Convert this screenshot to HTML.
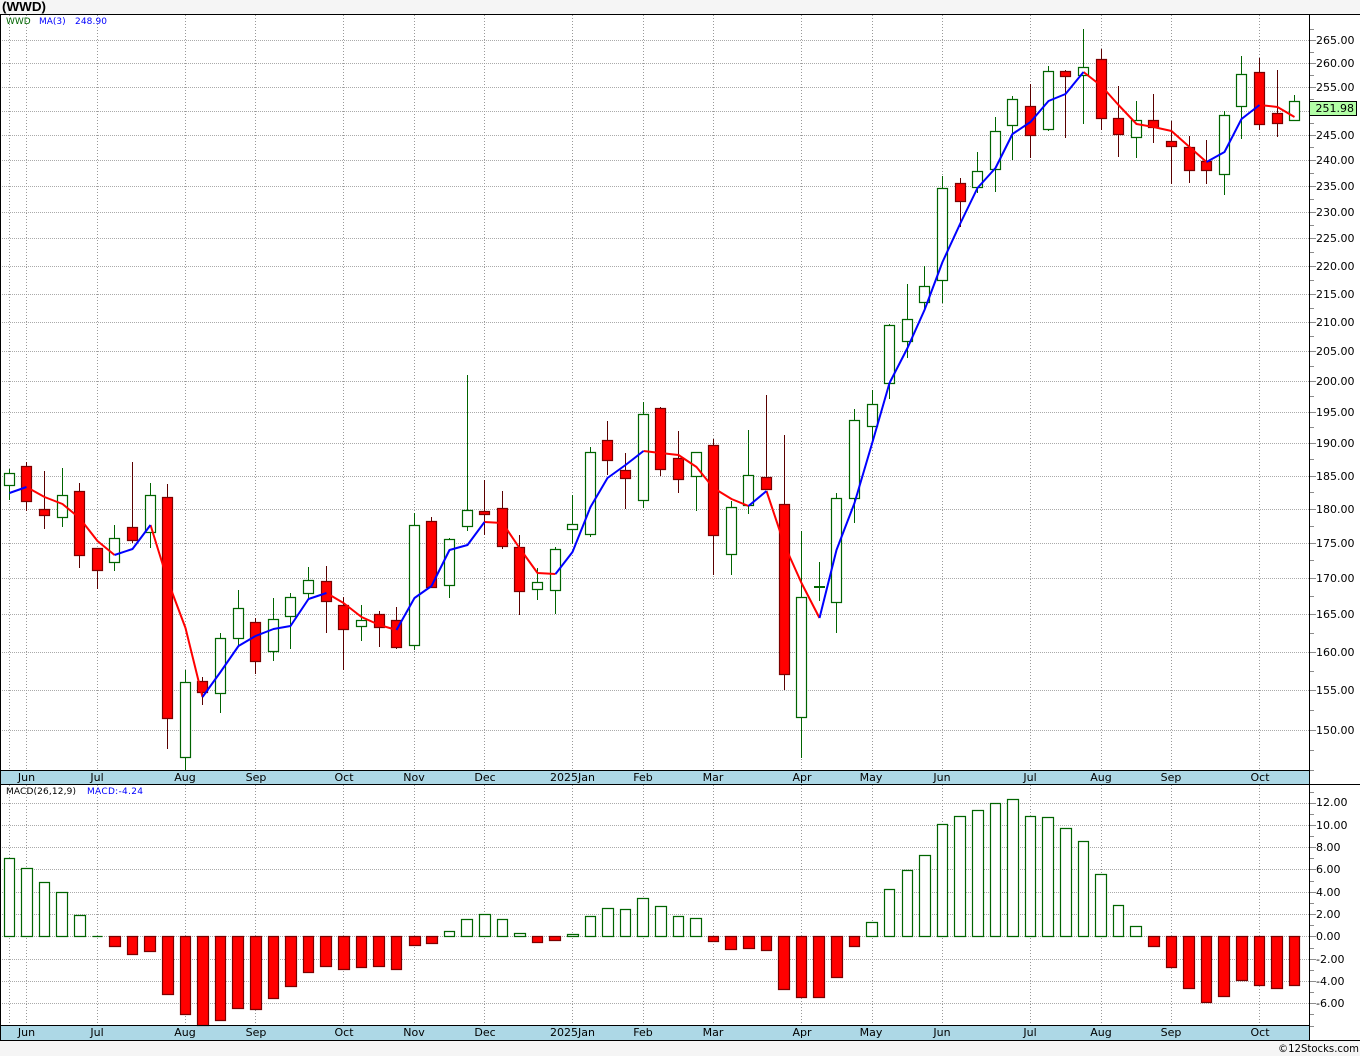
<!DOCTYPE html>
<html lang="en">
<head>
<meta charset="utf-8">
<title>WWD</title>
<style>
html,body{margin:0;padding:0;background:#f5f5f5;width:1360px;height:1056px;overflow:hidden}
svg{display:block;position:absolute;left:0;top:0}
text{font-family:"DejaVu Sans","Liberation Sans",sans-serif;font-size:11px;fill:#000}
.l{font-size:9px}
</style>
</head>
<body>
<svg width="1360" height="1056" viewBox="0 0 1360 1056" xmlns="http://www.w3.org/2000/svg">
<rect x="0" y="14" width="1360" height="1026" fill="#fff"/>
<rect x="0" y="770" width="1310" height="15" fill="#add8e6"/>
<rect x="0" y="1025" width="1310" height="15" fill="#add8e6"/>

<!-- grid -->
<g fill="none" stroke="#aaaaaa" stroke-width="1" stroke-dasharray="1 1">
<path d="M0 40.5H1315M0 63.5H1315M0 87.5H1315M0 111.5H1315M0 135.5H1315M0 160.5H1315M0 186.5H1315M0 212.5H1315M0 238.5H1315M0 266.5H1315M0 294.5H1315M0 322.5H1315M0 351.5H1315M0 381.5H1315M0 412.5H1315M0 443.5H1315M0 476.5H1315M0 509.5H1315M0 543.5H1315M0 578.5H1315M0 614.5H1315M0 652.5H1315M0 690.5H1315M0 730.5H1315"/>
<path d="M0 803.5H1315M0 825.5H1315M0 847.5H1315M0 869.5H1315M0 892.5H1315M0 914.5H1315M0 936.5H1315M0 959.5H1315M0 981.5H1315M0 1003.5H1315"/>
</g>
<g fill="none" stroke="#999999" stroke-width="1" stroke-dasharray="1 2">
<path d="M9.5 15V770M26.5 15V770M97.5 15V770M185.5 15V770M255.5 15V770M343.5 15V770M414.5 15V770M484.5 15V770M572.5 15V770M643.5 15V770M713.5 15V770M801.5 15V770M872.5 15V770M942.5 15V770M1030.5 15V770M1101.5 15V770M1171.5 15V770M1259.5 15V770"/>
<path d="M9.5 785V1025M26.5 785V1025M97.5 785V1025M185.5 785V1025M255.5 785V1025M343.5 785V1025M414.5 785V1025M484.5 785V1025M572.5 785V1025M643.5 785V1025M713.5 785V1025M801.5 785V1025M872.5 785V1025M942.5 785V1025M1030.5 785V1025M1101.5 785V1025M1171.5 785V1025M1259.5 785V1025"/>
</g>

<!-- axis ticks -->
<g fill="none" stroke="#8c8c8c" stroke-width="1">
<path d="M1310 40.5h6M1310 63.5h6M1310 87.5h6M1310 111.5h6M1310 135.5h6M1310 160.5h6M1310 186.5h6M1310 212.5h6M1310 238.5h6M1310 266.5h6M1310 294.5h6M1310 322.5h6M1310 351.5h6M1310 381.5h6M1310 412.5h6M1310 443.5h6M1310 476.5h6M1310 509.5h6M1310 543.5h6M1310 578.5h6M1310 614.5h6M1310 652.5h6M1310 690.5h6M1310 730.5h6"/>
<path d="M1310 29.5h4M1310 52.5h4M1310 75.5h4M1310 99.5h4M1310 123.5h4M1310 147.5h4M1310 173.5h4M1310 199.5h4M1310 225.5h4M1310 252.5h4M1310 280.5h4M1310 308.5h4M1310 336.5h4M1310 366.5h4M1310 396.5h4M1310 427.5h4M1310 459.5h4M1310 492.5h4M1310 526.5h4M1310 560.5h4M1310 596.5h4M1310 633.5h4M1310 671.5h4M1310 710.5h4M1310 750.5h4M1310 770.5h4"/>
<path d="M1310 803.5h6M1310 825.5h6M1310 847.5h6M1310 869.5h6M1310 892.5h6M1310 914.5h6M1310 936.5h6M1310 959.5h6M1310 981.5h6M1310 1003.5h6"/>
<path d="M1310 792.5h4M1310 814.5h4M1310 836.5h4M1310 858.5h4M1310 881.5h4M1310 903.5h4M1310 925.5h4M1310 948.5h4M1310 970.5h4M1310 992.5h4M1310 1014.5h4M1310 1026.5h4"/>
</g>

<!-- wicks -->
<path fill="none" stroke="#006400" stroke-width="1" d="M9.5 469V500M62.5 468V527M114.5 525V571M150.5 483V548M185.5 670V770M220.5 633V713M238.5 590V647M273.5 598V661M290.5 593V649M308.5 567V598M361.5 605V641M414.5 513V650M449.5 538V598M467.5 375V531M537.5 568V600M555.5 547V614M572.5 495V544M590.5 447V537M643.5 402V508M696.5 452V511M731.5 501V575M748.5 430V514M801.5 531V758M819.5 562V601M836.5 493V633M854.5 409V523M872.5 390V444M889.5 324V399M907.5 284V358M924.5 266V310M942.5 176V303M977.5 152V193M995.5 117V192M1012.5 96V160M1048.5 66V131M1083.5 29V124M1136.5 101V158M1224.5 111V195M1241.5 56V139M1294.5 95V120"/>
<path fill="none" stroke="#5a0000" stroke-width="1" d="M26.5 462V511M44.5 471V529M79.5 483V568M97.5 548V589M132.5 462V543M167.5 484V749M202.5 677V705M255.5 618V674M326.5 566V633M343.5 597V670M379.5 611V647M396.5 607V649M431.5 517V588M484.5 480V535M502.5 491V549M519.5 535V615M607.5 421V475M625.5 453V509M660.5 407V476M678.5 431V493M713.5 439V575M766.5 395V489M784.5 435V690M960.5 178V227M1030.5 84V158M1065.5 70V138M1101.5 49V130M1118.5 86V157M1153.5 94V143M1171.5 121V184M1189.5 136V183M1206.5 140V184M1259.5 58V130M1277.5 70V137"/>

<!-- green candle bodies -->
<path fill="#fff" stroke="#006400" stroke-width="1.2" d="M4.5 473.5h10v12h-10zM57.5 495.5h10v22h-10zM109.5 538.5h10v24h-10zM145.5 495.5h10v37h-10zM180.5 682.5h10v75h-10zM215.5 638.5h10v55h-10zM233.5 608.5h10v30h-10zM268.5 619.5h10v32h-10zM285.5 597.5h10v19h-10zM303.5 580.5h10v13h-10zM356.5 620.5h10v6h-10zM409.5 525.5h10v120h-10zM444.5 539.5h10v46h-10zM462.5 510.5h10v16h-10zM532.5 582.5h10v7h-10zM550.5 549.5h10v41h-10zM567.5 524.5h10v5h-10zM585.5 452.5h10v82h-10zM638.5 414.5h10v86h-10zM691.5 452.5h10v24h-10zM726.5 507.5h10v47h-10zM743.5 475.5h10v30h-10zM796.5 597.5h10v120h-10zM831.5 498.5h10v104h-10zM849.5 420.5h10v78h-10zM867.5 404.5h10v22h-10zM884.5 325.5h10v58h-10zM902.5 319.5h10v22h-10zM919.5 286.5h10v16h-10zM937.5 188.5h10v92h-10zM972.5 171.5h10v16h-10zM990.5 131.5h10v38h-10zM1007.5 99.5h10v26h-10zM1043.5 71.5h10v58h-10zM1078.5 67.5h10v8h-10zM1131.5 120.5h10v17h-10zM1219.5 115.5h10v59h-10zM1236.5 74.5h10v32h-10zM1289.5 101.5h10v19h-10z"/>
<rect x="814" y="586" width="11" height="2" fill="#006400"/>

<!-- red candle bodies -->
<path fill="#f00" stroke="#7a0000" stroke-width="1.2" d="M21.5 466.5h10v35h-10zM39.5 509.5h10v6h-10zM74.5 491.5h10v64h-10zM92.5 548.5h10v22h-10zM127.5 527.5h10v13h-10zM162.5 497.5h10v221h-10zM197.5 681.5h10v11h-10zM250.5 622.5h10v39h-10zM321.5 581.5h10v20h-10zM338.5 605.5h10v24h-10zM374.5 614.5h10v13h-10zM391.5 620.5h10v27h-10zM426.5 521.5h10v66h-10zM479.5 511.5h10v3h-10zM497.5 508.5h10v38h-10zM514.5 547.5h10v44h-10zM602.5 440.5h10v20h-10zM620.5 470.5h10v8h-10zM655.5 408.5h10v61h-10zM673.5 458.5h10v21h-10zM708.5 445.5h10v90h-10zM761.5 477.5h10v12h-10zM779.5 504.5h10v170h-10zM955.5 183.5h10v18h-10zM1025.5 106.5h10v29h-10zM1060.5 71.5h10v5h-10zM1096.5 59.5h10v59h-10zM1113.5 118.5h10v16h-10zM1148.5 120.5h10v7h-10zM1166.5 141.5h10v5h-10zM1184.5 147.5h10v23h-10zM1201.5 161.5h10v9h-10zM1254.5 72.5h10v52h-10zM1272.5 113.5h10v10h-10z"/>

<!-- moving average -->
<g fill="none" stroke-width="2" stroke-linejoin="round" stroke-linecap="butt">
<g stroke="#ff0000">
<polyline points="26.5,487 44.5,497 62.5,504 79.5,518 97.5,541 114.5,555"/>
<polyline points="150.5,525 167.5,580 185.5,628 202.5,697"/>
<polyline points="326.5,593 343.5,603 361.5,617 379.5,625 396.5,630"/>
<polyline points="484.5,522 502.5,523 519.5,548 537.5,573 555.5,574"/>
<polyline points="643.5,451 660.5,453 678.5,455 696.5,467 713.5,488 731.5,499 748.5,506"/>
<polyline points="766.5,491 784.5,545 801.5,583 819.5,618"/>
<polyline points="1083.5,72 1101.5,86 1118.5,105 1136.5,124 1153.5,127 1171.5,131 1189.5,147 1206.5,162"/>
<polyline points="1259.5,105 1277.5,107 1294.5,117"/>
</g>
<g stroke="#0000ff">
<polyline points="9.5,493 26.5,487"/>
<polyline points="114.5,555 132.5,549 150.5,525"/>
<polyline points="202.5,697 220.5,672 238.5,646 255.5,636 273.5,629 290.5,626 308.5,599 326.5,593"/>
<polyline points="396.5,630 414.5,598 431.5,586 449.5,550 467.5,545 484.5,522"/>
<polyline points="555.5,574 572.5,552 590.5,507 607.5,478 625.5,465 643.5,451"/>
<polyline points="748.5,506 766.5,491"/>
<polyline points="819.5,618 836.5,550 854.5,503 872.5,442 889.5,383 907.5,348 924.5,310 942.5,262 960.5,223 977.5,188 995.5,168 1012.5,134 1030.5,122 1048.5,101 1065.5,94 1083.5,72"/>
<polyline points="1206.5,162 1224.5,152 1241.5,119 1259.5,105"/>
</g>
</g>

<!-- MACD bars -->
<path fill="#fff" stroke="#006400" stroke-width="1.2" d="M4.5 936.5V858.5h10V936.5zM21.5 936.5V868.5h11V936.5zM39.5 936.5V882.5h10V936.5zM56.5 936.5V892.5h11V936.5zM74.5 936.5V915.5h11V936.5zM92.5 936.5h10M444.5 936.5V931.5h10V936.5zM461.5 936.5V919.5h11V936.5zM479.5 936.5V914.5h11V936.5zM497.5 936.5V919.5h10V936.5zM514.5 936.5V933.5h11V936.5zM567.5 936.5V934.5h11V936.5zM585.5 936.5V916.5h10V936.5zM602.5 936.5V908.5h11V936.5zM620.5 936.5V909.5h10V936.5zM637.5 936.5V898.5h11V936.5zM655.5 936.5V906.5h11V936.5zM673.5 936.5V916.5h10V936.5zM690.5 936.5V918.5h11V936.5zM866.5 936.5V922.5h11V936.5zM884.5 936.5V889.5h10V936.5zM902.5 936.5V870.5h10V936.5zM919.5 936.5V855.5h11V936.5zM937.5 936.5V824.5h10V936.5zM954.5 936.5V816.5h11V936.5zM972.5 936.5V810.5h11V936.5zM990.5 936.5V803.5h10V936.5zM1007.5 936.5V799.5h11V936.5zM1025.5 936.5V816.5h10V936.5zM1042.5 936.5V817.5h11V936.5zM1060.5 936.5V828.5h11V936.5zM1078.5 936.5V841.5h10V936.5zM1095.5 936.5V874.5h11V936.5zM1113.5 936.5V905.5h10V936.5zM1130.5 936.5V926.5h11V936.5z"/>
<path fill="#f00" stroke="#7a0000" stroke-width="1.2" d="M109.5 936.5V946.5h11V936.5zM127.5 936.5V954.5h10V936.5zM144.5 936.5V951.5h11V936.5zM162.5 936.5V994.5h11V936.5zM180.5 936.5V1014.5h10V936.5zM197.5 936.5V1025.5h11V936.5zM215.5 936.5V1020.5h10V936.5zM232.5 936.5V1008.5h11V936.5zM250.5 936.5V1009.5h11V936.5zM268.5 936.5V998.5h10V936.5zM285.5 936.5V986.5h11V936.5zM303.5 936.5V972.5h10V936.5zM320.5 936.5V966.5h11V936.5zM338.5 936.5V969.5h11V936.5zM356.5 936.5V967.5h10V936.5zM373.5 936.5V966.5h11V936.5zM391.5 936.5V969.5h10V936.5zM409.5 936.5V945.5h11V936.5zM426.5 936.5V943.5h11V936.5zM532.5 936.5V942.5h10V936.5zM549.5 936.5V940.5h11V936.5zM708.5 936.5V941.5h10V936.5zM725.5 936.5V949.5h11V936.5zM743.5 936.5V948.5h11V936.5zM761.5 936.5V950.5h10V936.5zM778.5 936.5V989.5h11V936.5zM796.5 936.5V997.5h10V936.5zM813.5 936.5V997.5h11V936.5zM831.5 936.5V977.5h11V936.5zM849.5 936.5V946.5h10V936.5zM1148.5 936.5V946.5h11V936.5zM1166.5 936.5V967.5h10V936.5zM1183.5 936.5V988.5h11V936.5zM1201.5 936.5V1002.5h10V936.5zM1218.5 936.5V996.5h11V936.5zM1236.5 936.5V980.5h11V936.5zM1254.5 936.5V985.5h10V936.5zM1271.5 936.5V988.5h11V936.5zM1289.5 936.5V985.5h10V936.5z"/>

<!-- frame -->
<g fill="#000">
<rect x="0" y="14" width="1360" height="1"/>
<rect x="0" y="14" width="1" height="1026"/>
<rect x="1309" y="14" width="1" height="1026"/>
<rect x="0" y="770" width="1309" height="1"/>
<rect x="0" y="784" width="1360" height="1"/>
<rect x="0" y="1025" width="1309" height="1"/>
<rect x="0" y="1040" width="1360" height="1"/>
</g>

<!-- title and legends -->
<text x="2" y="11" textLength="44" lengthAdjust="spacingAndGlyphs" style="font-family:'Liberation Sans',sans-serif;font-size:13px;font-weight:bold">(WWD)</text>
<text class="l" x="6" y="24" style="fill:#006400">WWD</text>
<text class="l" x="39" y="24" style="fill:#0000ff">MA(3)</text>
<text class="l" x="75" y="24" textLength="32" style="fill:#0000ff">248.90</text>
<text class="l" x="6" y="794" textLength="70">MACD(26,12,9)</text>
<text class="l" x="87" y="794" textLength="56" style="fill:#0000ff">MACD:-4.24</text>

<!-- month labels -->
<g text-anchor="middle">
<text x="26.5" y="781">Jun</text><text x="97" y="781">Jul</text><text x="185" y="781">Aug</text><text x="256" y="781">Sep</text><text x="344" y="781">Oct</text><text x="414" y="781">Nov</text><text x="485" y="781">Dec</text><text x="572.5" y="781">2025Jan</text><text x="643" y="781">Feb</text><text x="713" y="781">Mar</text><text x="802" y="781">Apr</text><text x="871" y="781">May</text><text x="942" y="781">Jun</text><text x="1030" y="781">Jul</text><text x="1101" y="781">Aug</text><text x="1171" y="781">Sep</text><text x="1260" y="781">Oct</text>
<text x="26.5" y="1036">Jun</text><text x="97" y="1036">Jul</text><text x="185" y="1036">Aug</text><text x="256" y="1036">Sep</text><text x="344" y="1036">Oct</text><text x="414" y="1036">Nov</text><text x="485" y="1036">Dec</text><text x="572.5" y="1036">2025Jan</text><text x="643" y="1036">Feb</text><text x="713" y="1036">Mar</text><text x="802" y="1036">Apr</text><text x="871" y="1036">May</text><text x="942" y="1036">Jun</text><text x="1030" y="1036">Jul</text><text x="1101" y="1036">Aug</text><text x="1171" y="1036">Sep</text><text x="1260" y="1036">Oct</text>
</g>

<!-- price axis labels -->
<g>
<text x="1316" y="44">265.00</text><text x="1316" y="67">260.00</text><text x="1316" y="91">255.00</text><text x="1316" y="139">245.00</text><text x="1316" y="164">240.00</text><text x="1316" y="190">235.00</text><text x="1316" y="216">230.00</text><text x="1316" y="242">225.00</text><text x="1316" y="270">220.00</text><text x="1316" y="298">215.00</text><text x="1316" y="326">210.00</text><text x="1316" y="355">205.00</text><text x="1316" y="385">200.00</text><text x="1316" y="416">195.00</text><text x="1316" y="447">190.00</text><text x="1316" y="480">185.00</text><text x="1316" y="513">180.00</text><text x="1316" y="547">175.00</text><text x="1316" y="582">170.00</text><text x="1316" y="618">165.00</text><text x="1316" y="656">160.00</text><text x="1316" y="694">155.00</text><text x="1316" y="734">150.00</text>
</g>
<rect x="1309.5" y="101.5" width="47" height="14" fill="#b3ffa6" stroke="#000" stroke-width="1"/>
<text x="1315.5" y="112">251.98</text>

<!-- MACD axis labels -->
<g>
<text x="1316" y="806">12.00</text><text x="1316" y="829">10.00</text><text x="1316" y="851">8.00</text><text x="1316" y="873">6.00</text><text x="1316" y="896">4.00</text><text x="1316" y="918">2.00</text><text x="1316" y="940">0.00</text><text x="1316" y="963">-2.00</text><text x="1316" y="985">-4.00</text><text x="1316" y="1007">-6.00</text>
</g>

<text x="1278" y="1052" textLength="81" lengthAdjust="spacingAndGlyphs">©12Stocks.com</text>
</svg>
</body>
</html>
